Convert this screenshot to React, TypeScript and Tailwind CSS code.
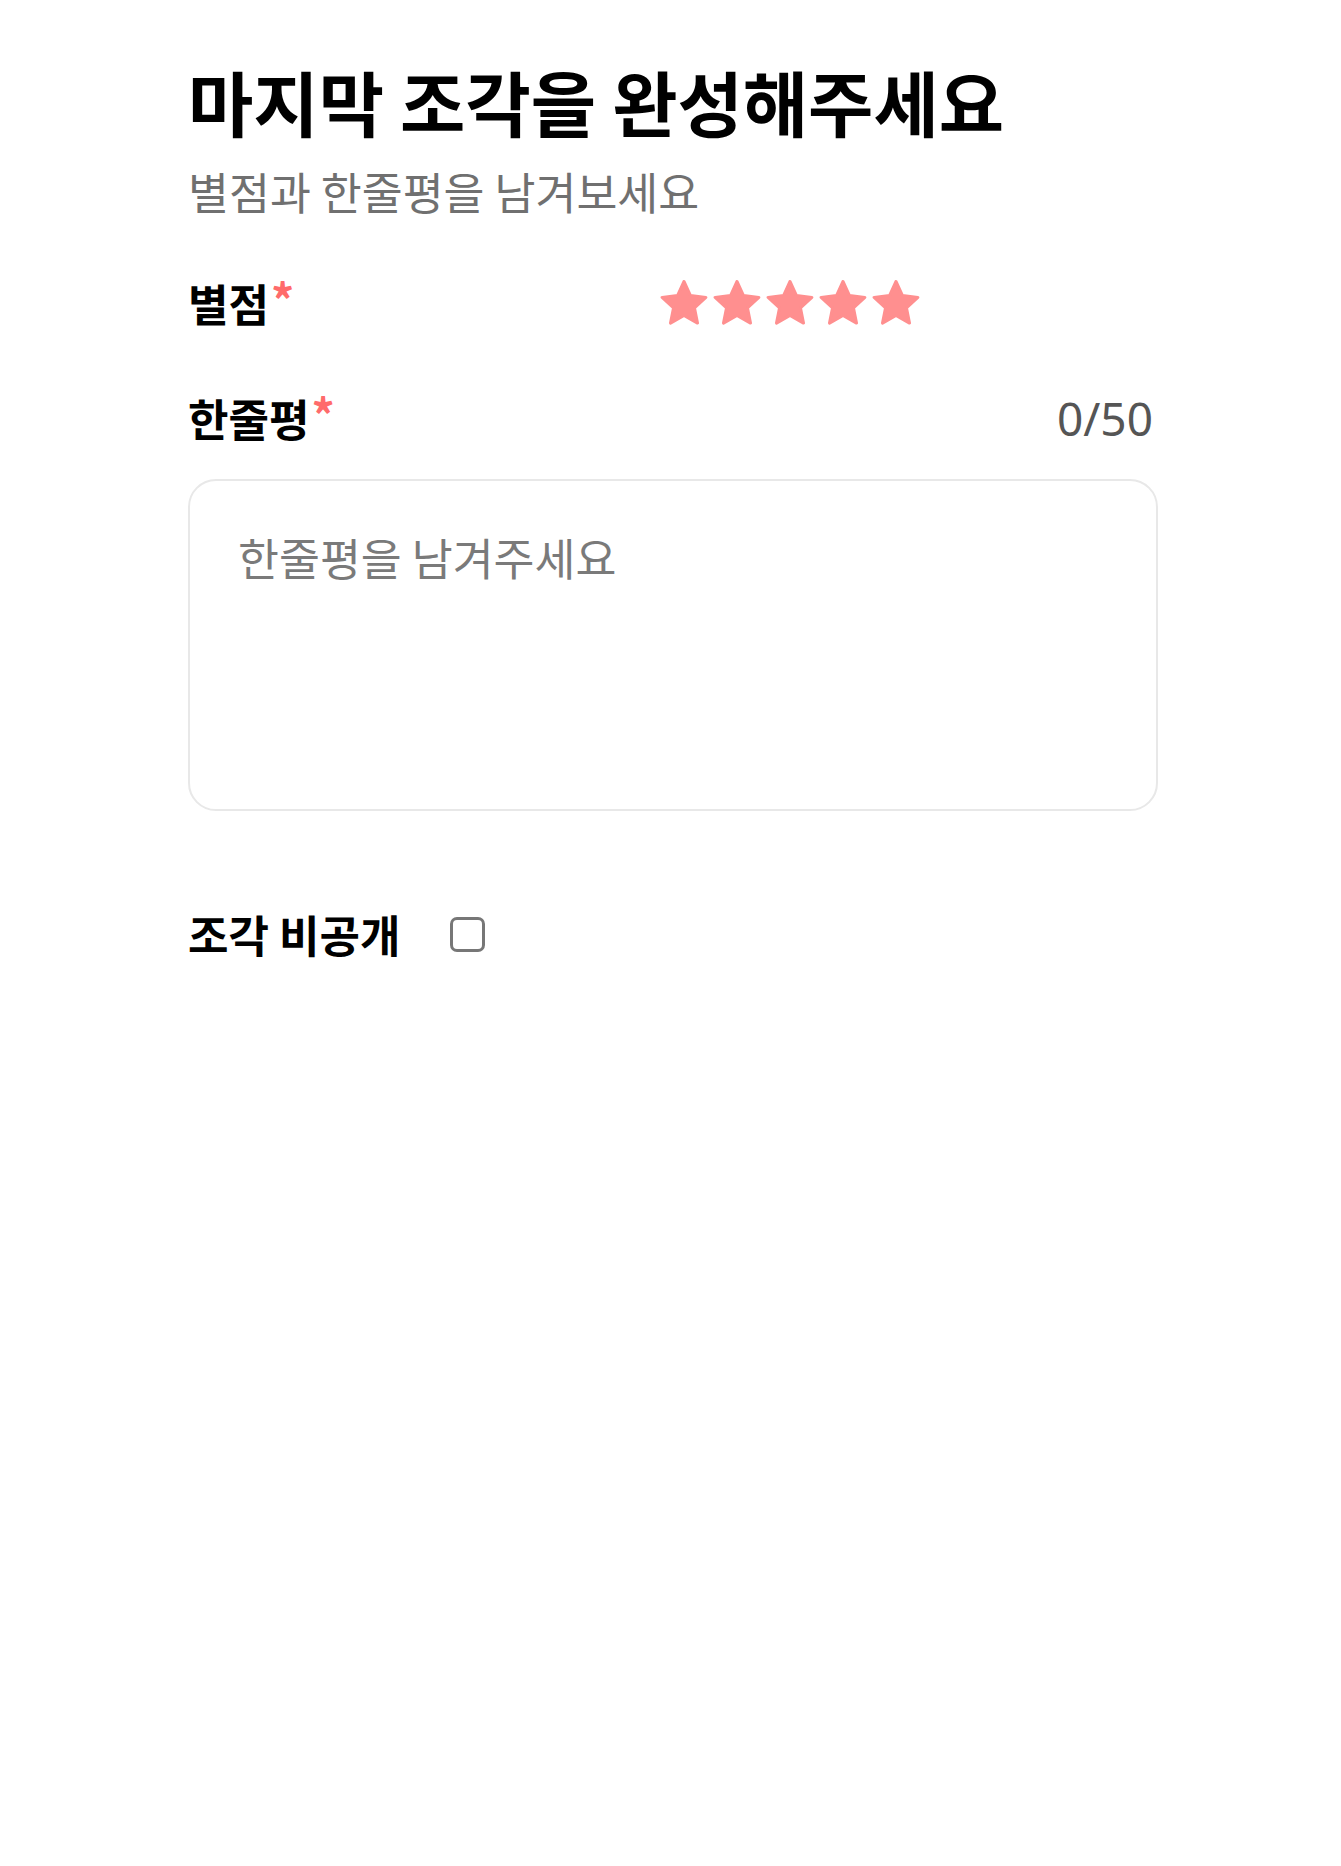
import React from "react";

function StarIcon() {
  return (
    <svg width="48" height="46" viewBox="0 0 48 46" className="block shrink-0">
      <polygon
        points="24,1.5 30.47,15.6 45.88,17.39 34.46,27.9 37.52,43.11 24,35.5 10.48,43.11 13.54,27.9 2.12,17.39 17.53,15.6"
        fill="#FF8F8F"
        stroke="#FF8F8F"
        strokeWidth="3"
        strokeLinejoin="round"
      />
    </svg>
  );
}

export default function App() {
  return (
    <div className="min-h-[1866px] w-full bg-white font-['Noto_Sans_CJK_KR','Noto_Sans',sans-serif]">
      <div className="ml-[188px] w-[970px] pt-[58px]">
        <h1 className="text-[71px] font-bold leading-[84px] text-black">
          마지막 조각을 완성해주세요
        </h1>
        <p className="mt-[21px] text-[44.5px] leading-[56px] text-[#707070]">
          별점과 한줄평을 남겨보세요
        </p>

        <div className="mt-[59px] flex items-center">
          <div className="flex w-[472px] items-start">
            <span className="text-[44px] font-bold leading-[50px] text-black">별점</span>
            <span className="ml-[2px] text-[46px] font-bold leading-[40px] text-[#FF6B6B]">*</span>
          </div>
          <div className="flex items-center gap-[5px]">
            <StarIcon />
            <StarIcon />
            <StarIcon />
            <StarIcon />
            <StarIcon />
          </div>
        </div>

        <div className="mt-[65px] flex items-center justify-between">
          <div className="flex items-start">
            <span className="text-[44px] font-bold leading-[50px] text-black">한줄평</span>
            <span className="ml-[2px] text-[46px] font-bold leading-[40px] text-[#FF6B6B]">*</span>
          </div>
          <span className="pr-[5px] font-['Noto_Sans',sans-serif] text-[46px] leading-[50px] text-[#555555]">
            0/50
          </span>
        </div>

        <div className="mt-[36px] h-[332px] w-full rounded-[28px] border-2 border-[#e8e8e8] px-[48px] pt-[48px]">
          <div className="text-[44.5px] leading-[56px] text-[#7a7a7a]">한줄평을 남겨주세요</div>
        </div>

        <div className="mt-[98px] flex items-center gap-[50px]">
          <span className="text-[44px] font-bold leading-[50px] text-black">조각 비공개</span>
          <div className="h-[35px] w-[35px] rounded-[7px] border-[3px] border-[#777777] bg-white" />
        </div>
      </div>
    </div>
  );
}
